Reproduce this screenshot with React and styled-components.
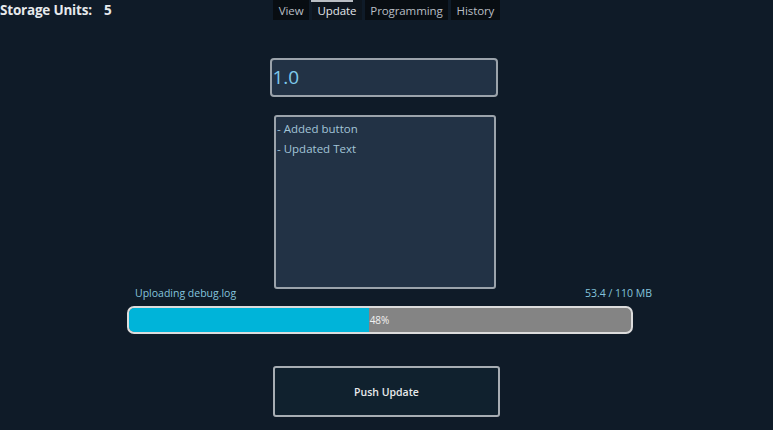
import React from "react";
import styled, { createGlobalStyle } from "styled-components";

const GlobalStyle = createGlobalStyle`
  html, body {
    margin: 0;
    padding: 0;
    background: #0f1b28;
    font-family: "Open Sans", "DejaVu Sans", sans-serif;
  }
`;

const Page = styled.div`
  width: 773px;
  height: 430px;
  background: #0f1b28;
  display: flex;
  flex-direction: column;
  align-items: center;
  overflow: hidden;
`;

const Header = styled.div`
  width: 100%;
  height: 20px;
  display: grid;
  grid-template-columns: 1fr auto 1fr;
  align-items: center;
`;

const Storage = styled.div`
  color: #e6e9ec;
  font-size: 13.5px;
  font-weight: 700;
  letter-spacing: -0.2px;
  display: flex;
  gap: 12px;
  margin-top: -1px;
`;

const Tabs = styled.div`
  display: flex;
  gap: 3px;
  height: 20px;
`;

const Tab = styled.div`
  position: relative;
  background: ${(p) => (p.active ? "#0d151d" : "#080d12")};
  color: ${(p) => (p.active ? "#e4e7ea" : "#b9bec4")};
  font-size: 11.5px;
  padding: 3px 5.5px 0;
  height: 20px;
  box-sizing: border-box;
  letter-spacing: -0.1px;

  &::before {
    content: "";
    display: ${(p) => (p.active ? "block" : "none")};
    position: absolute;
    left: -1px;
    right: 9px;
    top: 0;
    height: 2px;
    background: #b9bec3;
  }
`;

const Field = styled.div`
  width: 223px;
  height: 35px;
  margin-top: 38px;
  margin-right: 6px;
  border: 2px solid #9ba3ab;
  border-radius: 4px;
  background: #223245;
  color: #7ecaec;
  font-size: 19px;
  line-height: 34px;
  padding-left: 1px;
  box-sizing: content-box;
`;

const Notes = styled.div`
  width: 218px;
  height: 167px;
  margin-top: 18px;
  margin-right: 3px;
  border: 2px solid #9ba3ab;
  border-radius: 3px;
  background: #223245;
  padding: 3px 0 0 0;
  display: flex;
  flex-direction: column;
  gap: 3px;
`;

const Note = styled.div`
  color: #a3c5d8;
  font-size: 11.5px;
  line-height: 17px;
  display: flex;
  gap: 3px;
  padding-left: 1px;
`;

const Labels = styled.div`
  width: 517px;
  margin-top: -2px;
  margin-left: 14px;
  display: flex;
  justify-content: space-between;
  color: #84c4dc;
  font-size: 10.5px;
  line-height: 12px;
`;

const Bar = styled.div`
  width: 502px;
  height: 24px;
  margin-top: 7px;
  margin-right: 14px;
  border: 2px solid #dcdcdc;
  border-radius: 7px;
  background: #848484;
  position: relative;
  overflow: hidden;
  display: flex;
  align-items: center;
  justify-content: center;
`;

const Fill = styled.div`
  position: absolute;
  left: 0;
  top: 0;
  bottom: 0;
  background: #00b4d9;
  border-radius: 5px 0 0 5px;
`;

const Percent = styled.span`
  position: relative;
  color: #f2f2f2;
  font-size: 10px;
`;

const PushButton = styled.button`
  width: 227px;
  height: 51px;
  margin-top: 32px;
  border: 2px solid #a7adb3;
  border-radius: 3px;
  background: #10212e;
  color: #e8eaec;
  font-family: "Open Sans", "DejaVu Sans", sans-serif;
  font-size: 10.5px;
  font-weight: 600;
  box-sizing: border-box;
`;

export default function App() {
  const tabs = ["View", "Update", "Programming", "History"];
  const notes = ["Added button", "Updated Text"];
  const pct = 48;
  return (
    <>
      <GlobalStyle />
      <Page>
        <Header>
          <Storage>
            <span>Storage Units:</span>
            <span>5</span>
          </Storage>
          <Tabs>
            {tabs.map((t) => (
              <Tab key={t} active={t === "Update" ? 1 : 0}>
                {t}
              </Tab>
            ))}
          </Tabs>
          <div />
        </Header>
        <Field>1.0</Field>
        <Notes>
          {notes.map((n) => (
            <Note key={n}>
              <span>-</span>
              <span>{n}</span>
            </Note>
          ))}
        </Notes>
        <Labels>
          <span>Uploading debug.log</span>
          <span>53.4 / 110 MB</span>
        </Labels>
        <Bar>
          <Fill style={{ width: `${pct}%` }} />
          <Percent>{pct}%</Percent>
        </Bar>
        <PushButton>Push Update</PushButton>
      </Page>
    </>
  );
}
